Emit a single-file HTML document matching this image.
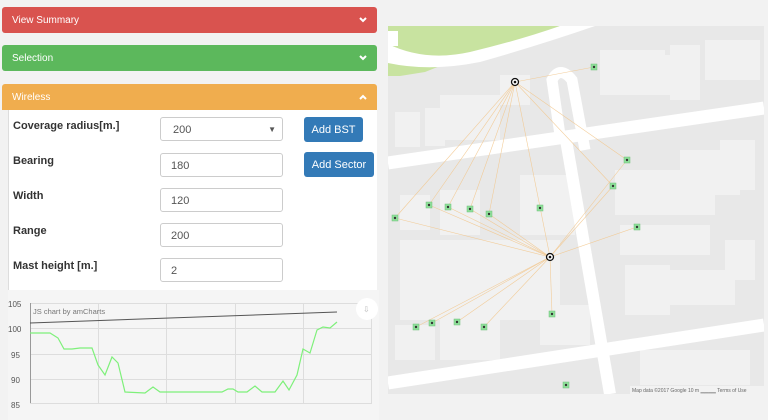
<!DOCTYPE html>
<html><head><style>
*{box-sizing:border-box;margin:0;padding:0}
body{width:768px;height:420px;background:#f2f2f2;font-family:"Liberation Sans",sans-serif;position:relative;overflow:hidden}
.ph{position:absolute;left:2px;width:375px;height:26px;border-radius:3px;color:#fff;font-size:10px;padding:8px 10px}
.ph svg{position:absolute;right:10px;top:10px}
.lab{position:absolute;left:13px;font-size:11px;font-weight:bold;color:#333}
.inp{position:absolute;left:160px;width:123px;height:24px;border:1px solid #ccc;border-radius:3px;background:#fff;font-size:11px;color:#555;padding:6px 10px}
.btn{position:absolute;left:304px;height:25px;background:#337ab7;border-radius:3px;color:#fff;font-size:11px;padding:7px 0;text-align:center;white-space:nowrap}
</style></head><body>
<div class="ph" style="top:7px;background:#d9534f">View Summary<svg width="8" height="6"><polyline points="1,1 4,4 7,1" fill="none" stroke="#fff" stroke-width="2"/></svg></div>
<div class="ph" style="top:45px;background:#5cb85c">Selection<svg width="8" height="6"><polyline points="1,1 4,4 7,1" fill="none" stroke="#fff" stroke-width="2"/></svg></div>
<div class="ph" style="top:84px;background:#f0ad4e;border-radius:3px 3px 0 0">Wireless<svg width="8" height="6"><polyline points="1,5 4,2 7,5" fill="none" stroke="#fff" stroke-width="2"/></svg></div>
<div style="position:absolute;left:8px;top:110px;width:369px;height:180px;background:#fff;border-left:1px solid #ddd"></div>
<div class="lab" style="top:120px">Coverage radius[m.]</div>
<div class="lab" style="top:155px">Bearing</div>
<div class="lab" style="top:190px">Width</div>
<div class="lab" style="top:225px">Range</div>
<div class="lab" style="top:260px">Mast height [m.]</div>
<div class="inp" style="top:117px;padding-left:12px">200<span style="position:absolute;right:6px;top:7px;font-size:8px">▼</span></div>
<div class="inp" style="top:153px">180</div>
<div class="inp" style="top:188px">120</div>
<div class="inp" style="top:223px">200</div>
<div class="inp" style="top:258px">2</div>
<div class="btn" style="top:117px;width:59px">Add BST</div>
<div class="btn" style="top:152px;width:70px">Add Sector</div>
<div style="position:absolute;left:8px;top:290px;width:371px;height:130px;background:#f5f5f5"></div>
<svg style="position:absolute;left:0;top:290px" width="385" height="130">
<g font-size="8" fill="#555" font-family="Liberation Sans"><text x="8" y="17">105</text><text x="8" y="42">100</text><text x="11" y="68">95</text><text x="11" y="93">90</text><text x="11" y="118">85</text></g>
<g stroke="#ddd" stroke-width="1"><line x1="30" y1="13.5" x2="372" y2="13.5"/><line x1="30" y1="38.5" x2="372" y2="38.5"/><line x1="30" y1="64.5" x2="372" y2="64.5"/><line x1="30" y1="89.5" x2="372" y2="89.5"/><line x1="30" y1="113.5" x2="372" y2="113.5"/>
<line x1="98.5" y1="13" x2="98.5" y2="113"/><line x1="166.5" y1="13" x2="166.5" y2="113"/><line x1="235.5" y1="13" x2="235.5" y2="113"/><line x1="303.5" y1="13" x2="303.5" y2="113"/><line x1="371.5" y1="13" x2="371.5" y2="113"/></g>
<line x1="30.5" y1="13" x2="30.5" y2="113" stroke="#999"/>
<text x="33" y="24" font-size="7.5" fill="#777" font-family="Liberation Sans">JS chart by amCharts</text>
<line x1="30" y1="33" x2="337" y2="22" stroke="#555" stroke-width="1"/>
<polyline fill="none" stroke="#7ef07a" stroke-width="1.2" points="30,43 50,43 58,48 64,59 72,59 80,58 92,58 98,75 105,85 112,67 118,73 125,102 145,103 153,97 160,102 197,102 222,102 228,99 233,99 238,102 247,102 255,96 262,102 275,102 283,91 289,100 297,85 303,59 310,63 317,40 323,37 330,38 337,32"/>
<circle cx="367" cy="19" r="11" fill="#fff"/><text x="363" y="22" font-size="8" fill="#bbb">⇩</text>
</svg>
<svg style="position:absolute;left:388px;top:26px" width="376" height="368" viewBox="388 26 376 368">
<rect x="388" y="26" width="376" height="368" fill="#e8e8e8"/>
<path d="M388 26 L560 26 L520 42 Q480 60 440 66 L425 72 L400 76 L388 76Z" fill="#c8e3a0"/>
<path d="M388 44 Q425 62 470 52 Q520 40 560 26 L595 26 Q540 45 480 62 Q430 72 388 63Z" fill="#fff"/>
<g fill="#f1f1f1">
<rect x="395" y="112" width="25" height="35"/><rect x="425" y="108" width="20" height="38"/><rect x="440" y="95" width="60" height="45"/><rect x="500" y="75" width="30" height="30"/>
<rect x="600" y="50" width="65" height="45"/><rect x="640" y="55" width="45" height="40"/><rect x="670" y="45" width="30" height="55"/><rect x="705" y="40" width="55" height="40"/>
<rect x="400" y="195" width="30" height="35"/><rect x="440" y="190" width="40" height="45"/><rect x="520" y="175" width="55" height="60"/><rect x="615" y="170" width="100" height="45"/><rect x="680" y="150" width="60" height="45"/><rect x="720" y="140" width="35" height="50"/>
<rect x="400" y="240" width="160" height="80"/><rect x="620" y="225" width="90" height="30"/><rect x="625" y="265" width="45" height="50"/><rect x="665" y="270" width="70" height="35"/><rect x="725" y="240" width="30" height="40"/>
<rect x="395" y="325" width="40" height="35"/><rect x="440" y="320" width="60" height="40"/><rect x="540" y="305" width="50" height="40"/><rect x="640" y="350" width="110" height="35"/>
</g>
<g stroke="#fff" fill="none" stroke-linecap="butt">
<path d="M388 163 L764 108" stroke-width="13"/>
<path d="M388 383 L764 325" stroke-width="13"/>
<path d="M566 140 L610 394" stroke-width="12"/>
<path d="M560 135 L552 80 Q560 65 572 80 L585 150" stroke-width="11"/>
</g>
<g stroke="#f2c890" stroke-width="0.6" opacity="0.9">
<line x1="515" y1="82" x2="594" y2="67"/><line x1="515" y1="82" x2="627" y2="160"/><line x1="515" y1="82" x2="613" y2="186"/><line x1="515" y1="82" x2="395" y2="218"/><line x1="515" y1="82" x2="429" y2="205"/><line x1="515" y1="82" x2="448" y2="207"/><line x1="515" y1="82" x2="470" y2="209"/><line x1="515" y1="82" x2="489" y2="214"/><line x1="515" y1="82" x2="550" y2="257"/>
<line x1="550" y1="257" x2="395" y2="218"/><line x1="550" y1="257" x2="429" y2="205"/><line x1="550" y1="257" x2="448" y2="207"/><line x1="550" y1="257" x2="470" y2="209"/><line x1="550" y1="257" x2="489" y2="214"/><line x1="550" y1="257" x2="627" y2="160"/><line x1="550" y1="257" x2="613" y2="186"/><line x1="550" y1="257" x2="637" y2="227"/><line x1="550" y1="257" x2="552" y2="314"/><line x1="550" y1="257" x2="416" y2="327"/><line x1="550" y1="257" x2="432" y2="323"/><line x1="550" y1="257" x2="457" y2="322"/><line x1="550" y1="257" x2="484" y2="327"/>
</g>
<g fill="#8fe09a" stroke="#6fbf7a" stroke-width="0.5">
<rect x="591" y="64" width="6" height="6"/><rect x="624" y="157" width="6" height="6"/><rect x="610" y="183" width="6" height="6"/><rect x="634" y="224" width="6" height="6"/><rect x="392" y="215" width="6" height="6"/><rect x="426" y="202" width="6" height="6"/><rect x="445" y="204" width="6" height="6"/><rect x="467" y="206" width="6" height="6"/><rect x="486" y="211" width="6" height="6"/><rect x="537" y="205" width="6" height="6"/><rect x="549" y="311" width="6" height="6"/><rect x="413" y="324" width="6" height="6"/><rect x="429" y="320" width="6" height="6"/><rect x="454" y="319" width="6" height="6"/><rect x="481" y="324" width="6" height="6"/><rect x="563" y="382" width="6" height="6"/>
</g>
<g fill="#333"><circle cx="594" cy="67" r="1.2"/><circle cx="627" cy="160" r="1.2"/><circle cx="613" cy="186" r="1.2"/><circle cx="637" cy="227" r="1.2"/><circle cx="395" cy="218" r="1.2"/><circle cx="429" cy="205" r="1.2"/><circle cx="448" cy="207" r="1.2"/><circle cx="470" cy="209" r="1.2"/><circle cx="489" cy="214" r="1.2"/><circle cx="540" cy="208" r="1.2"/><circle cx="552" cy="314" r="1.2"/><circle cx="416" cy="327" r="1.2"/><circle cx="432" cy="323" r="1.2"/><circle cx="457" cy="322" r="1.2"/><circle cx="484" cy="327" r="1.2"/><circle cx="566" cy="385" r="1.2"/></g>
<g><circle cx="515" cy="82" r="3.5" fill="#fff" stroke="#111" stroke-width="1.3"/><circle cx="515" cy="82" r="1.3" fill="#111"/><circle cx="550" cy="257" r="3.5" fill="#fff" stroke="#111" stroke-width="1.3"/><circle cx="550" cy="257" r="1.3" fill="#111"/></g>
<rect x="388" y="31" width="10" height="15" fill="#fff"/>
<rect x="630" y="386" width="134" height="8" fill="#f4f4f4" opacity="0.8"/>
<text x="632" y="392" font-size="5" fill="#666" font-family="Liberation Sans">Map data ©2017 Google   10 m ▁▁▁▁   Terms of Use</text>
</svg>
</body></html>
